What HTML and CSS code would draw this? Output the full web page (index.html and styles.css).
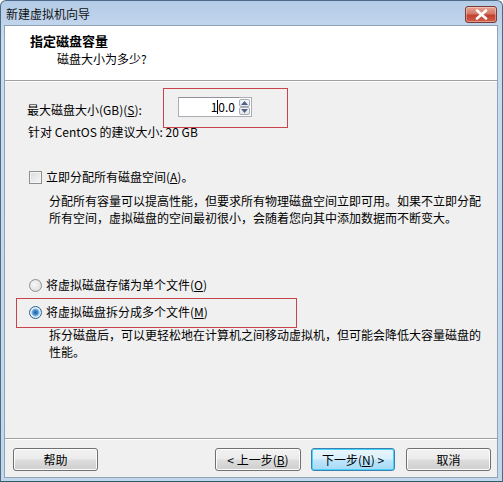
FILE: index.html
```html
<!DOCTYPE html>
<html lang="zh-CN">
<head>
<meta charset="utf-8">
<title>新建虚拟机向导</title>
<link rel="stylesheet" href="styles.css">
</head>
<body>
<div class="window">
  <div class="titlebar">
    <span class="title">新建虚拟机向导</span>
    <div class="close">
      <svg width="13" height="11" viewBox="0 0 13 11"><path d="M2 1.5 L11 9.5 M11 1.5 L2 9.5" stroke="#fff" stroke-width="2.6" stroke-linecap="round"/></svg>
    </div>
  </div>
  <div class="client">
    <div class="header">
      <div class="h-title">指定磁盘容量</div>
      <div class="h-sub">磁盘大小为多少?</div>
    </div>
    <div class="content">
      <div class="size-row">
        <span class="size-label">最大磁盘大小(GB)(<u>S</u>):</span>
        <div class="spin-wrap highlight">
          <div class="spin-field"><span>1</span><span class="caret"></span><span>0.0</span></div>
          <div class="spin-btns">
            <div class="spin-btn"><svg width="7" height="4" viewBox="0 0 7 4"><path d="M0 4 L3.5 0 L7 4Z" fill="#4d6185"/></svg></div>
            <div class="spin-btn"><svg width="7" height="4" viewBox="0 0 7 4"><path d="M0 0 L3.5 4 L7 0Z" fill="#4d6185"/></svg></div>
          </div>
        </div>
      </div>
      <div class="recommend">针对 CentOS 的建议大小: 20 GB</div>

      <div class="option check-row">
        <span class="checkbox"></span>
        <span>立即分配所有磁盘空间(<u>A</u>)。</span>
      </div>
      <div class="desc desc-1">分配所有容量可以提高性能，但要求所有物理磁盘空间立即可用。如果不立即分配<br>所有空间，虚拟磁盘的空间最初很小，会随着您向其中添加数据而不断变大。</div>

      <div class="option radio-1">
        <span class="radio"></span>
        <span>将虚拟磁盘存储为单个文件(<u>O</u>)</span>
      </div>
      <div class="option radio-2 highlight">
        <span class="radio checked"></span>
        <span>将虚拟磁盘拆分成多个文件(<u>M</u>)</span>
      </div>
      <div class="desc desc-2">拆分磁盘后，可以更轻松地在计算机之间移动虚拟机，但可能会降低大容量磁盘的<br>性能。</div>
    </div>
    <div class="footer">
      <button class="btn">帮助</button>
      <button class="btn btn-back">&lt; 上一步(<u>B</u>)</button>
      <button class="btn btn-default">下一步(<u>N</u>) &gt;</button>
      <button class="btn btn-cancel">取消</button>
    </div>
  </div>
</div>
</body>
</html>
```

FILE: styles.css
```css
* { box-sizing: border-box; }
html, body {
  margin: 0;
  padding: 0;
  width: 503px;
  height: 482px;
  overflow: hidden;
  background: #fff;
}
body {
  font-family: "Noto Sans CJK SC", "Noto Sans", sans-serif;
  font-size: 12px;
  color: #000;
}
u { text-decoration: underline; text-underline-offset: 1px; }

.window {
  width: 503px;
  height: 482px;
  display: flex;
  flex-direction: column;
  background: linear-gradient(to bottom, #b4cce7 0px, #c9dbef 40px, #c3d7ec 100%);
  border: 1px solid #4e6b86;
  border-radius: 6px 6px 0 0;
  padding: 0 4px 3px 3px;
  border-bottom-color: #2e5b6a;
}
.titlebar {
  height: 24px;
  display: flex;
  align-items: center;
  justify-content: space-between;
  padding: 0 1px 0 2px;
}
.title {
  font-size: 12px;
  color: #111;
  line-height: 16px;
  margin-top: 1px;
}
.close {
  width: 32px;
  height: 17px;
  margin-top: 2px;
  border: 1px solid #7a3a36;
  border-radius: 3px;
  background: linear-gradient(to bottom, #e8a493 0%, #d47868 45%, #c2402f 55%, #d0604a 100%);
  display: flex;
  align-items: center;
  justify-content: center;
  box-shadow: inset 0 0 0 1px rgba(255,255,255,0.35);
}

.client {
  flex: 1;
  display: flex;
  flex-direction: column;
  background: #f0f0f0;
  border: 1px solid #8ea2b8;
}
.header {
  background: #fff;
  padding: 7px 0 13px 25px;
  border-bottom: 1px solid #a0a0a0;
  box-shadow: 0 1px 0 #fff;
}
.h-title {
  font-weight: bold;
  font-size: 13px;
  line-height: 16px;
}
.h-sub {
  margin-top: 2px;
  margin-left: 27px;
  line-height: 16px;
}

.content {
  flex: 1;
  padding: 16px 10px 0 22px;
}
.size-row {
  display: flex;
  align-items: flex-start;
  height: 20px;
}
.size-label {
  width: 151px;
  margin-top: 5px;
  line-height: 16px;
}
.highlight { position: relative; }
.spin-wrap {
  display: flex;
  height: 20px;
}
.spin-wrap::after {
  content: "";
  position: absolute;
  left: -15px;
  top: -9px;
  width: 123px;
  height: 38px;
  border: 1px solid #c8434a;
  pointer-events: none;
}
.spin-field {
  width: 61px;
  height: 20px;
  border: 1px solid #abadb3;
  border-top-color: #8e9299;
  border-right: none;
  background: #fff;
  display: flex;
  align-items: center;
  justify-content: flex-end;
  padding-right: 4px;
  line-height: 16px;
}
.caret {
  display: inline-block;
  width: 1px;
  height: 14px;
  background: #000;
}
.spin-btns {
  width: 13px;
  height: 20px;
  display: flex;
  flex-direction: column;
  border: 1px solid #abadb3;
  border-left: none;
  background: #fff;
  padding: 1px 1px 1px 0;
}
.spin-btn {
  flex: 1;
  border: 1px solid #a6adb6;
  border-radius: 2px;
  background: linear-gradient(to bottom, #f8f8f8, #e3e6ea);
  display: flex;
  align-items: center;
  justify-content: center;
}
.recommend {
  margin-top: 7px;
  line-height: 16px;
  margin-left: 1px;
}

.option {
  display: flex;
  align-items: center;
  gap: 4px;
  line-height: 16px;
  margin-left: 2px;
}
.check-row { margin-top: 29px; }
.checkbox {
  width: 13px;
  height: 13px;
  border: 1px solid #8e8f8f;
  background: linear-gradient(135deg, #dcdcdc, #f6f6f6);
  box-shadow: inset 0 0 0 1px #f4f4f4;
}
.desc {
  margin-left: 22px;
  line-height: 17px;
  white-space: nowrap;
}
.desc-1 { margin-top: 7px; }
.radio-1 { margin-top: 51px; }
.radio-2 { margin-top: 11px; }
.radio-2::after {
  content: "";
  position: absolute;
  left: -13px;
  top: -6px;
  width: 279px;
  height: 28px;
  border: 1px solid #c8434a;
  pointer-events: none;
}
.radio {
  width: 13px;
  height: 13px;
  border-radius: 50%;
  border: 1px solid #8e8f8f;
  background: radial-gradient(circle at 40% 40%, #f8f8f8, #d6d6d6);
}
.radio.checked {
  border-color: #2c628b;
  background: radial-gradient(circle at 50% 50%, #2a5e9e 0, #3d85c6 2px, #7cb8e8 3.5px, #e9f3fb 4.5px, #d2e4f4 6px);
}
.desc-2 { margin-top: 6px; }

.footer {
  height: 39px;
  border-top: 1px solid #a0a0a0;
  box-shadow: inset 0 1px 0 #fff;
  display: flex;
  align-items: flex-start;
  padding: 9px 6px 0 8px;
}
.btn {
  width: 85px;
  height: 23px;
  font-family: inherit;
  font-size: 12px;
  line-height: 16px;
  color: #000;
  padding: 0;
  border: 1px solid #707070;
  border-radius: 3px;
  background: linear-gradient(to bottom, #f2f2f2 0%, #ebebeb 48%, #dddddd 52%, #cfcfcf 100%);
  box-shadow: inset 0 0 0 1px #fcfcfc;
}
.btn-back { margin-left: auto; width: 86px; }
.btn-default {
  margin-left: 10px;
  width: 84px;
  border-color: #3c7fb1;
  background: linear-gradient(to bottom, #eaf6fd 0%, #d9f0fc 48%, #bee6fd 52%, #a7d9f5 100%);
  box-shadow: inset 0 0 0 1px #48d3fb;
}
.btn-cancel { margin-left: 11px; }
```
